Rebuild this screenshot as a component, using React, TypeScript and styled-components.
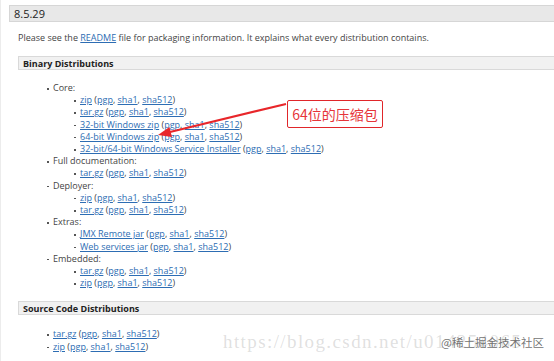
import React from 'react';
import styled, { createGlobalStyle } from 'styled-components';

const GlobalStyle = createGlobalStyle`
  html, body {
    margin: 0;
    padding: 0;
    background: #ffffff;
  }
  body {
    font-family: "Open Sans", "Liberation Sans", sans-serif;
    color: #333;
  }
`;

const Page = styled.div`
  position: relative;
  width: 554px;
  height: 361px;
  overflow: hidden;
  background: #fff;
  border-left: 1px solid #ececec;
  box-sizing: border-box;
  padding-top: 5px;
`;

const VersionBar = styled.div`
  margin-left: 8px;
  height: 15px;
  display: flex;
  align-items: center;
  padding-left: 4px;
  background: #e8e8e8;
  border: 1px solid #d6d6d6;
  border-right: none;
  font-size: 11px;
  color: #222;
`;

const Body = styled.div`
  padding-left: 17px;
`;

const Intro = styled.p`
  margin: 10px 0 0;
  font-size: 9px;
  line-height: 12px;
  color: #444;
`;

const SectionBar = styled.div<{ $top: number }>`
  margin-top: ${p => p.$top}px;
  height: 12px;
  display: flex;
  align-items: center;
  padding-left: 4px;
  background: #f1f1f1;
  border: 1px solid #d9d9d9;
  border-right: none;
  font-size: 9px;
  font-weight: 700;
  color: #222;
`;

const List = styled.ul<{ $top?: number }>`
  margin: ${p => p.$top ?? 0}px 0 0;
  padding-left: 35px;
  list-style: none;
  font-size: 9px;
  line-height: 12.2px;
  color: #444;
`;

const SubList = styled.ul`
  margin: 0;
  padding-left: 27px;
  list-style: none;
`;

const Item = styled.li`
  position: relative;
  white-space: nowrap;

  &::before {
    content: '';
    position: absolute;
    left: -6px;
    top: 6px;
    width: 1.5px;
    height: 1.5px;
    background: #555;
  }
`;

const A = styled.a`
  color: #2d6db3;
  text-decoration: underline;
  text-underline-offset: 1px;
`;

const Callout = styled.div`
  position: absolute;
  left: 286px;
  top: 100px;
  width: 96px;
  height: 28px;
  box-sizing: border-box;
  border: 1.5px solid #e0262a;
  border-radius: 2px;
  display: flex;
  align-items: center;
  justify-content: center;
  color: #e6353a;
  font-family: "Noto Sans CJK SC", "Noto Sans", sans-serif;
  font-size: 14px;
  background: #fff;
`;

const Arrow = styled.svg`
  position: absolute;
  left: 0;
  top: 0;
  pointer-events: none;
`;

const Watermark = styled.div`
  position: absolute;
  left: 222px;
  top: 331px;
  font-family: "Liberation Serif", "DejaVu Serif", serif;
  font-size: 19px;
  letter-spacing: 1.4px;
  color: rgba(150, 150, 150, 0.3);
  white-space: nowrap;
`;

const Stamp = styled.div`
  position: absolute;
  left: 440px;
  top: 334px;
  font-family: "Noto Sans CJK SC", sans-serif;
  font-size: 11.5px;
  color: rgba(90, 90, 90, 0.85);
  white-space: nowrap;
`;

const Sums = () => (
  <>
    {' ('}
    <A>pgp</A>, <A>sha1</A>, <A>sha512</A>)
  </>
);

const Dl = ({ label }: { label: string }) => (
  <Item>
    <A>{label}</A>
    <Sums />
  </Item>
);

const App: React.FC = () => (
  <Page>
    <GlobalStyle />
    <VersionBar>8.5.29</VersionBar>
    <Body>
      <Intro>
        Please see the <A>README</A> file for packaging information. It explains what every distribution contains.
      </Intro>
      <SectionBar $top={12}>Binary Distributions</SectionBar>
      <List $top={12}>
        <Item>
          Core:
          <SubList>
            <Dl label="zip" />
            <Dl label="tar.gz" />
            <Dl label="32-bit Windows zip" />
            <Dl label="64-bit Windows zip" />
            <Dl label="32-bit/64-bit Windows Service Installer" />
          </SubList>
        </Item>
        <Item>
          Full documentation:
          <SubList>
            <Dl label="tar.gz" />
          </SubList>
        </Item>
        <Item>
          Deployer:
          <SubList>
            <Dl label="zip" />
            <Dl label="tar.gz" />
          </SubList>
        </Item>
        <Item>
          Extras:
          <SubList>
            <Dl label="JMX Remote jar" />
            <Dl label="Web services jar" />
          </SubList>
        </Item>
        <Item>
          Embedded:
          <SubList>
            <Dl label="tar.gz" />
            <Dl label="zip" />
          </SubList>
        </Item>
      </List>
      <SectionBar $top={12}>Source Code Distributions</SectionBar>
      <List $top={13}>
        <Dl label="tar.gz" />
        <Dl label="zip" />
      </List>
    </Body>

    <Arrow width="554" height="361" viewBox="0 0 554 361">
      <line x1="285" y1="104" x2="169" y2="132" stroke="#e8262a" strokeWidth="2.2" />
      <polygon points="157,135 171,137 168.4,127" fill="#e8262a" />
    </Arrow>
    <Callout>64位的压缩包</Callout>

    <Watermark>https://blog.csdn.net/u014254065</Watermark>
    <Stamp>@稀土掘金技术社区</Stamp>
  </Page>
);

export default App;
